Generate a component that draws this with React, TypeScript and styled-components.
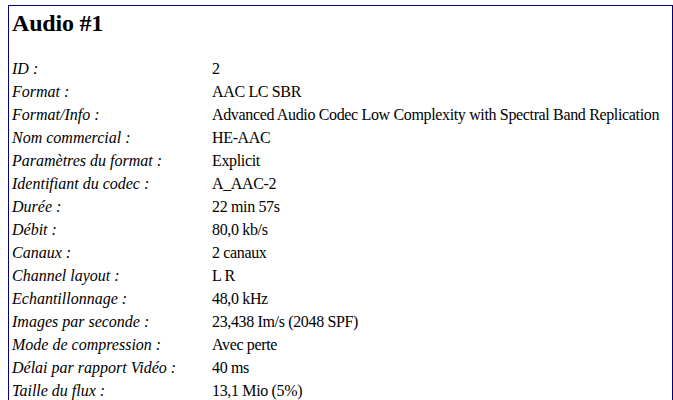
import React from "react";
import styled, { createGlobalStyle } from "styled-components";

const GlobalStyle = createGlobalStyle`
  html, body {
    margin: 0;
    padding: 0;
    background: #ffffff;
  }
  body {
    font-family: "Liberation Serif", "Times New Roman", serif;
    color: #000000;
  }
`;

const Page = styled.div`
  padding: 5px 0 0 8px;
`;

const Section = styled.section`
  width: 665px;
  box-sizing: border-box;
  border: 1px solid #000080;
  padding: 3px 3px 12px 3px;
`;

const Title = styled.h2`
  margin: 0 0 20px 0;
  font-size: 24px;
  line-height: 28px;
  font-weight: bold;
  letter-spacing: -0.2px;
`;

const InfoGrid = styled.dl`
  display: grid;
  grid-template-columns: 200px 1fr;
  margin: 0;
  font-size: 16px;
  line-height: 23px;
`;

const Label = styled.dt`
  font-style: italic;
  white-space: nowrap;
`;

const Value = styled.dd`
  margin: 0;
  white-space: nowrap;
  letter-spacing: -0.35px;
`;

const rows: [string, string][] = [
  ["ID :", "2"],
  ["Format :", "AAC LC SBR"],
  ["Format/Info :", "Advanced Audio Codec Low Complexity with Spectral Band Replication"],
  ["Nom commercial :", "HE-AAC"],
  ["Paramètres du format :", "Explicit"],
  ["Identifiant du codec :", "A_AAC-2"],
  ["Durée :", "22 min 57s"],
  ["Débit :", "80,0 kb/s"],
  ["Canaux :", "2 canaux"],
  ["Channel layout :", "L R"],
  ["Echantillonnage :", "48,0 kHz"],
  ["Images par seconde :", "23,438 Im/s (2048 SPF)"],
  ["Mode de compression :", "Avec perte"],
  ["Délai par rapport Vidéo :", "40 ms"],
  ["Taille du flux :", "13,1 Mio (5%)"],
];

const App = () => {
  return (
    <Page>
      <GlobalStyle />
      <Section>
        <Title>Audio #1</Title>
        <InfoGrid>
          {rows.map(([label, value]) => (
            <React.Fragment key={label}>
              <Label>{label}</Label>
              <Value>{value}</Value>
            </React.Fragment>
          ))}
        </InfoGrid>
      </Section>
    </Page>
  );
};

export default App;
